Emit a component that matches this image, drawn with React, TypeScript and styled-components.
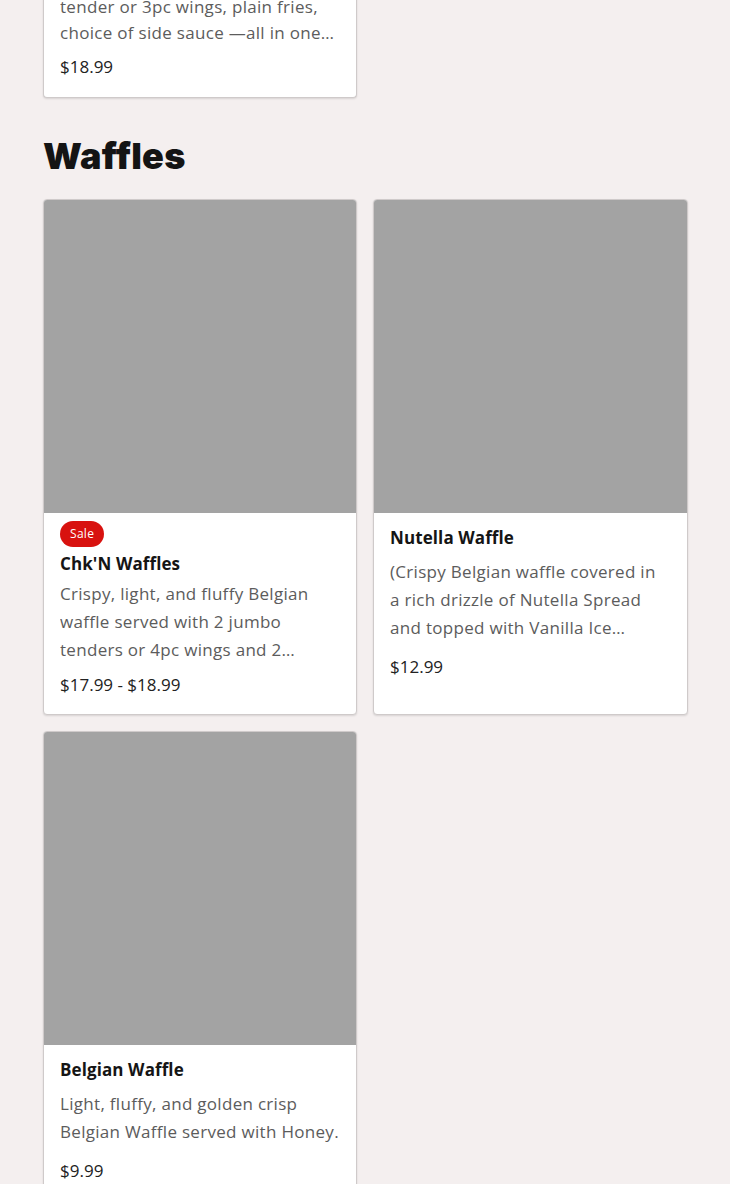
import React from "react";
import styled, { createGlobalStyle } from "styled-components";

const Global = createGlobalStyle`
  html, body { margin: 0; padding: 0; background: #f4efef; }
  body { font-family: "Open Sans", "Liberation Sans", sans-serif; color: #111; }
  * { box-sizing: border-box; }
`;

const Page = styled.main`
  padding: 0 42px 40px 43px;
  overflow: hidden;
  height: 1184px;
`;

const TailCard = styled.div`
  width: 314px;
  margin-top: -32px;
  background: #fff;
  border: 1px solid #cfcaca;
  border-top: none;
  border-radius: 0 0 4px 4px;
  box-shadow: 0 1px 2px rgba(0, 0, 0, 0.12);
  padding: 0 15px 16px 16px;
`;

const SectionTitle = styled.h2`
  margin: 38px 0 23px 0;
  font-family: "Inter", "Liberation Sans", sans-serif;
  font-weight: 900;
  font-size: 36px;
  line-height: 40px;
  letter-spacing: 0.3px;
  color: #141414;
`;

const Grid = styled.div`
  display: grid;
  grid-template-columns: 314px 315px;
  column-gap: 16px;
  row-gap: 16px;
`;

const Card = styled.article`
  display: flex;
  flex-direction: column;
  background: #fff;
  border: 1px solid #cfcaca;
  border-radius: 4px;
  overflow: hidden;
  box-shadow: 0 1px 2px rgba(0, 0, 0, 0.12);
`;

const Photo = styled.div`
  height: 313px;
  background: #a3a3a3;
`;

const Body = styled.div<{ $sale?: boolean }>`
  padding: ${(p) => (p.$sale ? "8px 15px 15px 16px" : "12px 15px 16px 16px")};
  display: flex;
  flex-direction: column;
`;

const Badge = styled.span`
  align-self: flex-start;
  background: #d8120f;
  color: #fff;
  font-size: 12px;
  letter-spacing: 0.3px;
  line-height: 26px;
  height: 26px;
  padding: 0 10px;
  border-radius: 13px;
  margin-bottom: 4px;
`;

const Title = styled.h3<{ $sale?: boolean }>`
  margin: 0 0 ${(p) => (p.$sale ? "3px" : "7px")} 0;
  font-size: 17px;
  line-height: 26px;
  font-weight: 700;
  color: #151515;
  letter-spacing: 0.1px;
`;

const Desc = styled.p<{ $tight?: boolean; $sale?: boolean }>`
  margin: 0 0 ${(p) => (p.$tight ? "7px" : p.$sale ? "6px" : "10px")} 0;
  font-size: 17px;
  line-height: ${(p) => (p.$tight ? "26px" : "28px")};
  letter-spacing: 0.3px;
  color: #5c5c5c;
  display: -webkit-box;
  -webkit-line-clamp: 3;
  -webkit-box-orient: vertical;
  overflow: hidden;
`;

const Price = styled.div`
  font-size: 17px;
  line-height: 28px;
  color: #222;
  margin-top: 1px;
`;

type Item = { name: string; desc: string; price: string; sale?: boolean };

const items: Item[] = [
  {
    name: "Chk'N Waffles",
    desc: "Crispy, light, and fluffy Belgian waffle served with 2 jumbo tenders or 4pc wings and 2 sides\u00a0of your choice with syrup.",
    price: "$17.99 - $18.99",
    sale: true,
  },
  {
    name: "Nutella Waffle",
    desc: "(Crispy Belgian waffle covered in a\u00a0rich drizzle of Nutella Spread and topped with Vanilla Ice Cream\u00a0and strawberries.)",
    price: "$12.99",
  },
  {
    name: "Belgian Waffle",
    desc: "Light, fluffy, and golden crisp Belgian Waffle served with Honey.",
    price: "$9.99",
  },
];

export default function App() {
  return (
    <>
      <Global />
      <Page>
        <TailCard>
          <Desc $tight>
            Combo with 1 jumbo chicken tender or 3pc wings, plain fries, choice of side sauce —all in one box with a drink.
          </Desc>
          <Price>$18.99</Price>
        </TailCard>
        <SectionTitle>Waffles</SectionTitle>
        <Grid>
          {items.map((it) => (
            <Card key={it.name}>
              <Photo />
              <Body $sale={it.sale}>
                {it.sale && <Badge>Sale</Badge>}
                <Title $sale={it.sale}>{it.name}</Title>
                <Desc $sale={it.sale}>{it.desc}</Desc>
                <Price>{it.price}</Price>
              </Body>
            </Card>
          ))}
        </Grid>
      </Page>
    </>
  );
}
